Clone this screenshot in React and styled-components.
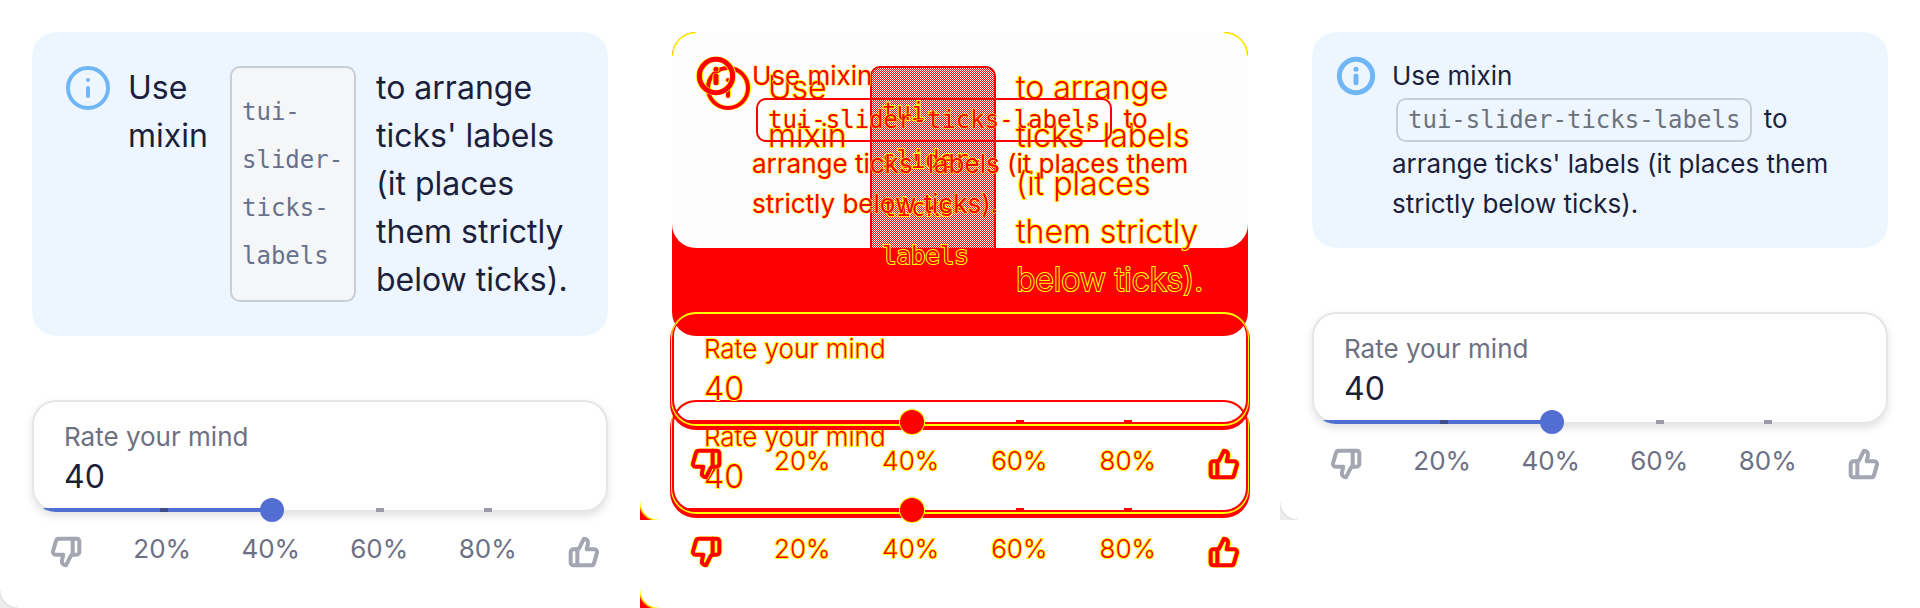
import React, { useId, useState } from "react";
import styled, { createGlobalStyle, ThemeProvider } from "styled-components";
import { Info, ThumbsDown, ThumbsUp } from "lucide-react";

const GlobalStyle = createGlobalStyle`
  *, *::before, *::after { box-sizing: border-box; }
  body {
    margin: 0;
    background: #fff;
    font-family: Inter, "Open Sans", sans-serif;
    font-weight: 400;
  }
`;

const natural = {
  card: "#edf6ff",
  text: "#1b1f3b",
  muted: "#6e7083",
  codeText: "#68718a",
  codeBorder: "#c8cdd7",
  codeFill: "#f5f6f8",
  inlineCodeText: "#6c727c",
  info: "#70b6f6",
  thumbIcon: "#a4a6b2",
  accent: "#526ed3",
  tick: "#9a9aab",
  tickPassed: "#3f4c8c",
  field: "#fff",
  fieldBorder: "inset 0 0 0 2px #e5e5e5, 0 4px 8px rgba(0, 0, 0, 0.12)",
  thumbRing: "none",
  outlined: false,
  cornerLine: "#dfdfdf",
  corner: "#eeeeee",
};

const diffBefore = {
  card: "#f00",
  text: "#f00",
  muted: "#f00",
  codeText: "#f00",
  codeBorder: "#f00",
  codeFill:
    "linear-gradient(#f00, #f00) 0 100% / 100% 52px no-repeat, repeating-conic-gradient(#f00 0 25%, #fff 0 50%) 0 0 / 2px 2px",
  inlineCodeText: "#f00",
  info: "#f00",
  thumbIcon: "#f00",
  accent: "#f00",
  tick: "#f00",
  tickPassed: "#f00",
  field: "transparent",
  fieldBorder: "inset 0 0 0 2px #f00, 0 1px 0 1px #ff0, 0 4px 0 2px #f00",
  thumbRing: "0 0 0 1px #ff0",
  outlined: true,
  cornerLine: "#ff0",
  corner: "#f00",
};

const diffAfter = {
  ...diffBefore,
  card: `radial-gradient(circle at 100% 100%, transparent 22px, #ff0 23px) 0 0 / 24px 24px no-repeat,
    radial-gradient(circle at 0 100%, transparent 22px, #ff0 23px) 100% 0 / 24px 24px no-repeat,
    #fdfdfd`,
  codeFill: "transparent",
  fieldBorder:
    "inset 0 2px 0 0 #ff0, inset 0 0 0 2px #f00, 0 1px 0 1px #ff0, 0 4px 0 2px #f00",
};

const Board = styled.main`
  display: grid;
  grid-template-columns: repeat(3, minmax(0, 1fr));
  align-items: start;
`;

const Stack = styled.div`
  display: grid;
  align-items: start;
  & > * { grid-area: 1 / 1; }
`;

const Panel = styled.section`
  display: flex;
  flex-direction: column;
  gap: 64px;
  min-width: 0;
  padding: 32px 32px 38px;
  color: ${(p) => p.theme.text};
  background: radial-gradient(
      circle at 100% 0,
      transparent 17px,
      ${(p) => p.theme.cornerLine} 18px,
      ${(p) => p.theme.corner} 20px
    ) 0 100% / 18px 18px no-repeat;
  ${(p) => p.theme.outlined && `
    font-weight: 300;
    -webkit-text-stroke: 2px #ff0;
    paint-order: stroke;
    svg { filter: drop-shadow(1px 0 #ff0) drop-shadow(-1px 0 #ff0); }
  `}
`;

/* Cards keep no stacking context of their own, so that the contents of
   stacked cards are all drawn above every card's background. */
const Notice = styled.div`
  position: relative;
  display: flex;
  align-items: flex-start;
  gap: 16px;
  padding: 32px;
  border-radius: 24px;
  background: ${(p) => p.theme.card};
  font-size: 32px;
  line-height: 48px;
  & > * { position: relative; z-index: 2; }
  & > svg { flex: none; color: ${(p) => p.theme.info}; }
`;

const CompactNotice = styled(Notice)`
  padding: 24px;
  font-size: 26px;
  font-weight: 400;
  line-height: 40px;
  ${(p) => p.theme.outlined && "-webkit-text-stroke-width: 1px;"}
`;

const Copy = styled.p`
  margin: 0;
  min-width: 0;
`;

const Lead = styled.span`
  flex: 0 0 82px;
`;

const Rest = styled.span`
  flex: 1;
  min-width: 0;
`;

const Code = styled.code`
  border: 2px solid ${(p) => p.theme.codeBorder};
  border-radius: 10px;
  padding: 0 10px;
  font: 24px "DejaVu Sans Mono", monospace;
`;

const InlineCode = styled(Code)`
  display: inline-block;
  margin: 2px 4px;
  color: ${(p) => p.theme.inlineCodeText};
  line-height: 40px;
`;

const BlockCode = styled(Code)`
  display: flex;
  align-items: center;
  flex: 0 0 126px;
  align-self: stretch;
  margin: 2px 4px;
  color: ${(p) => p.theme.codeText};
  background: ${(p) => p.theme.codeFill};
  background-origin: padding-box;
  line-height: 48px;
`;

const Field = styled.div`
  position: relative;
  display: flex;
  flex-direction: column;
  gap: 4px;
  padding: 21px 32px 15px;
  border-radius: 24px;
  background: ${(p) => p.theme.field};
  box-shadow: ${(p) => p.theme.fieldBorder};
`;

const FieldLabel = styled.label`
  color: ${(p) => p.theme.muted};
  font-size: 26px;
  line-height: 32px;
`;

const FieldValue = styled.input`
  width: 100%;
  height: 40px;
  padding: 0;
  border: 0;
  outline: 0;
  background: transparent;
  color: inherit;
  font: inherit;
  font-size: 32px;
  line-height: 40px;
`;

const Track = styled.div`
  position: absolute;
  inset: 0;
  overflow: hidden;
  border-radius: 24px;
  pointer-events: none;
`;

const Fill = styled.span`
  position: absolute;
  left: 0;
  bottom: 0;
  height: 4px;
  background: ${(p) => p.theme.accent};
`;

const Tick = styled.span`
  position: absolute;
  bottom: 0;
  width: 8px;
  height: 4px;
  background: ${(p) => (p.$passed ? p.theme.tickPassed : p.theme.tick)};
`;

const Range = styled.input`
  position: absolute;
  left: 12px;
  bottom: -10px;
  width: calc(100% - 12px);
  height: 24px;
  margin: 0;
  appearance: none;
  background: transparent;
  &::-webkit-slider-thumb {
    appearance: none;
    width: 24px;
    height: 24px;
    border-radius: 50%;
    background: ${(p) => p.theme.accent};
    box-shadow: ${(p) => p.theme.thumbRing};
  }
`;

const Scale = styled.div`
  display: grid;
  grid-template-columns: 58px repeat(4, 1fr) 58px;
  margin-top: 16px;
  padding: 0 8px 0 18px;
  color: ${(p) => p.theme.muted};
  font-size: 26px;
  line-height: 42px;
  text-align: center;
  & > svg { margin-top: 8px; color: ${(p) => p.theme.thumbIcon}; }
  & > svg:last-child { justify-self: end; }
`;

const marks = [20, 40, 60, 80];

function Rating() {
  const id = useId();
  const [value, setValue] = useState(40);
  const change = (e) => setValue(Number(e.target.value) || 0);
  return (
    <div>
      <Field>
        <FieldLabel htmlFor={id}>Rate your mind</FieldLabel>
        <FieldValue id={id} type="text" value={value} onChange={change} />
        <Track>
          <Fill style={{ width: `calc(24px + (100% - 36px) * ${value / 100})` }} />
          {marks.map((m) => (
            <Tick
              key={m}
              $passed={m <= value}
              style={{ left: `calc(20px + (100% - 36px) * ${m / 100})` }}
            />
          ))}
        </Track>
        <Range
          type="range"
          min="0"
          max="100"
          value={value}
          onChange={change}
          aria-label="Rate your mind"
        />
      </Field>
      <Scale>
        <ThumbsDown size={32} strokeWidth={3} />
        {marks.map((m) => (
          <span key={m}>{m}%</span>
        ))}
        <ThumbsUp size={32} strokeWidth={3} />
      </Scale>
    </div>
  );
}

function Before({ theme }) {
  return (
    <ThemeProvider theme={theme}>
      <Panel>
        <Notice>
          <Info size={48} />
          <Lead>Use mixin</Lead>
          <BlockCode>tui-slider-ticks-labels</BlockCode>
          <Rest>to arrange ticks' labels (it places them strictly below ticks).</Rest>
        </Notice>
        <Rating />
      </Panel>
    </ThemeProvider>
  );
}

function After({ theme }) {
  return (
    <ThemeProvider theme={theme}>
      <Panel>
        <CompactNotice>
          <Info size={40} strokeWidth={3} />
          <Copy>
            Use mixin <InlineCode>tui-slider-ticks-labels</InlineCode> to arrange
            ticks' labels (it places them strictly below ticks).
          </Copy>
        </CompactNotice>
        <Rating />
      </Panel>
    </ThemeProvider>
  );
}

export default function App() {
  return (
    <>
      <GlobalStyle />
      <Board>
        <Before theme={natural} />
        <Stack>
          <Before theme={diffBefore} />
          <After theme={diffAfter} />
        </Stack>
        <After theme={natural} />
      </Board>
    </>
  );
}
